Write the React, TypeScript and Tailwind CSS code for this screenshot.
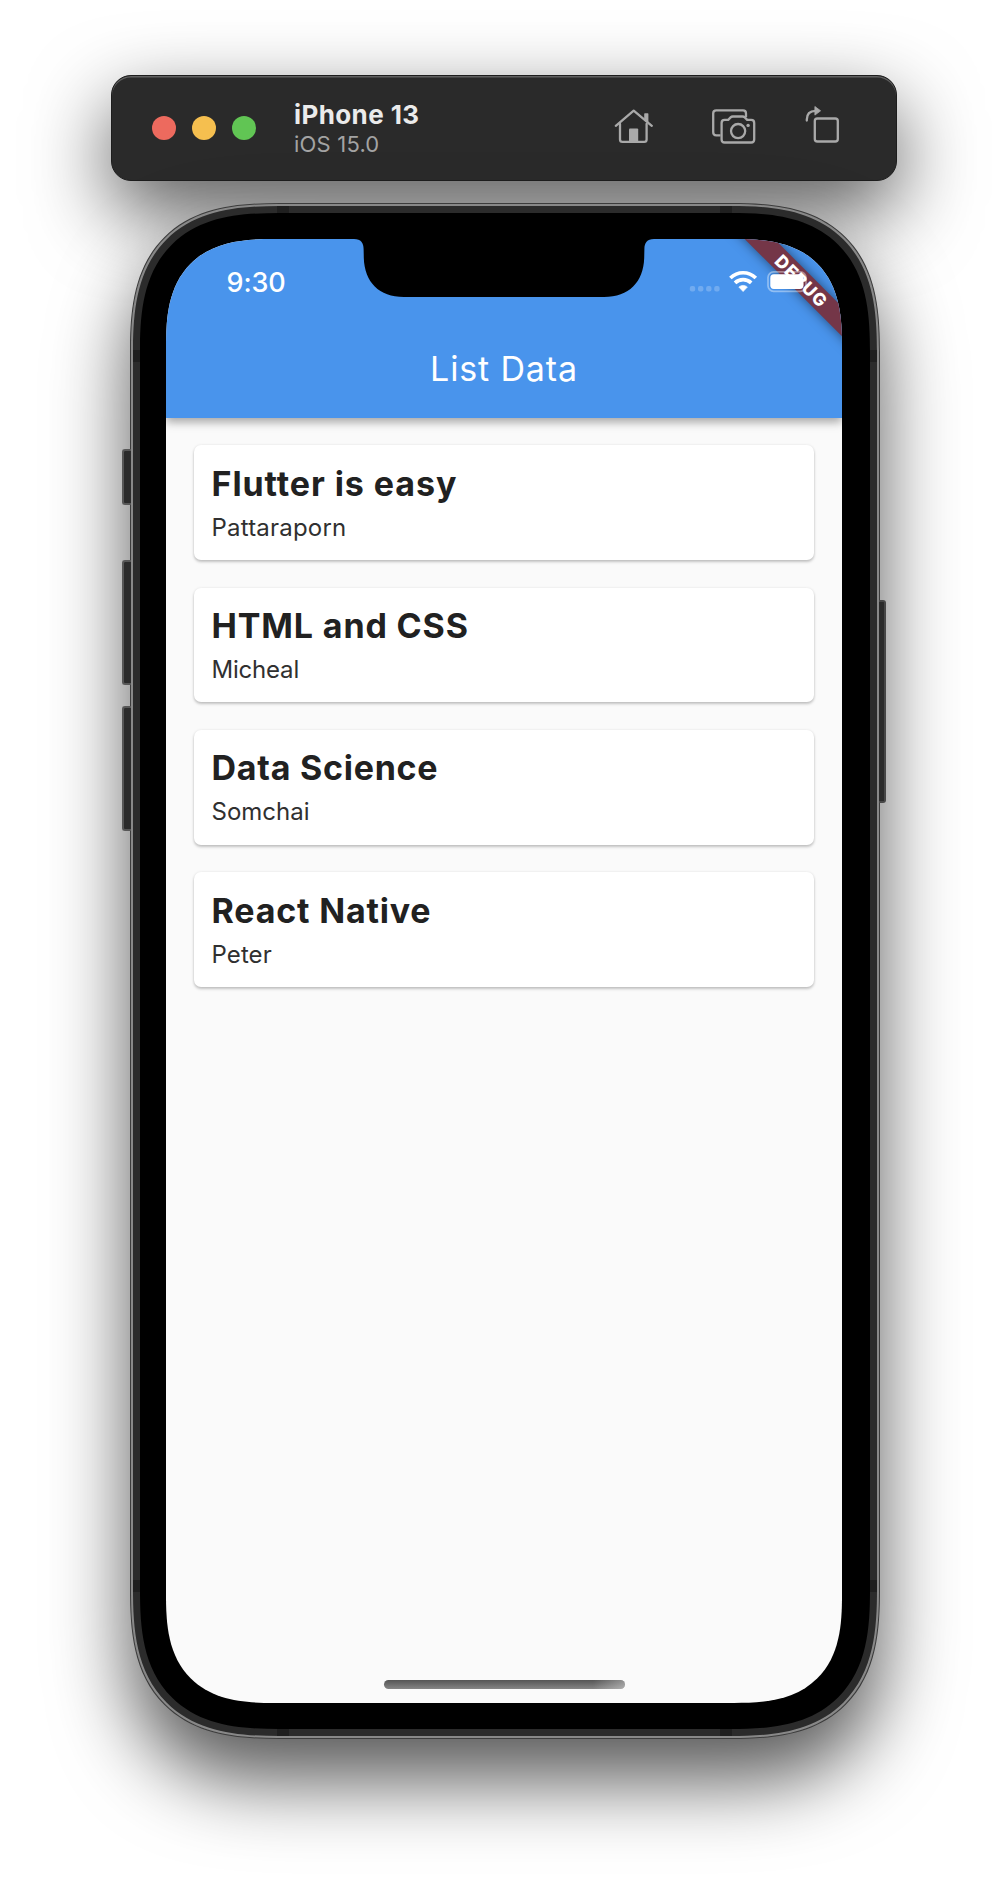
import React from "react";

const courses = [
  { title: "Flutter is easy", author: "Pattaraporn", titleSpacing: "tracking-[0.92px]", authorSpacing: "tracking-[0.2px]" },
  { title: "HTML and CSS", author: "Micheal", titleSpacing: "tracking-[0.85px]", authorSpacing: "tracking-[-0.2px]" },
  { title: "Data Science", author: "Somchai", titleSpacing: "tracking-[0.75px]", authorSpacing: "tracking-[0px]" },
  { title: "React Native", author: "Peter", titleSpacing: "tracking-[0.82px]", authorSpacing: "tracking-[0.1px]" },
];

function HomeIcon() {
  return (
    <svg width="42" height="40" viewBox="0 0 42 40" fill="none" stroke="#a9a9a9" strokeWidth="2.3" strokeLinecap="round" strokeLinejoin="round">
      <path d="M2.8 19.8 L20.7 4.6 L38.8 19.8" />
      <path d="M7 18 V33.4 Q7 35.8 9.4 35.8 H31.2 Q33.6 35.8 33.6 33.4 V18" />
      <path d="M31.2 8 Q31.2 7.3 31.9 7.3 H34.7 Q35.4 7.3 35.4 8 V17.4 L31.2 14.2 Z" fill="#a9a9a9" stroke="none" />
      <path d="M16 23.5 Q16 22.5 17 22.5 H24.2 Q25.2 22.5 25.2 23.5 V36.5 H16 Z" fill="#a9a9a9" stroke="none" />
    </svg>
  );
}

function CameraIcon() {
  return (
    <svg width="46" height="38" viewBox="0 0 46 38" fill="none" stroke="#a9a9a9" strokeWidth="2.3" strokeLinejoin="round">
      <path d="M10.5 27.3 H6.2 Q3.2 27.3 3.2 24.3 V5.4 Q3.2 2.4 6.2 2.4 H33 Q36 2.4 36 5.4 V9" />
      <path d="M14.6 11.9 H18.2 L20.6 9.4 Q21.5 8.5 22.8 8.5 H32.6 Q33.9 8.5 34.8 9.4 L37.2 11.9 H41.2 Q44.2 11.9 44.2 14.9 V31.5 Q44.2 34.5 41.2 34.5 H14.6 Q11.6 34.5 11.6 31.5 V14.9 Q11.6 11.9 14.6 11.9 Z" />
      <circle cx="28.1" cy="23.1" r="7.1" />
      <circle cx="38.1" cy="17.4" r="1.7" fill="#a9a9a9" stroke="none" />
    </svg>
  );
}

function RotateIcon() {
  return (
    <svg width="36" height="40" viewBox="0 0 36 40" fill="none" stroke="#a9a9a9" strokeWidth="2.3">
      <path d="M2.8 16.6 V15.5 Q2.8 7 11.5 6.8" strokeLinecap="round" />
      <path d="M10.9 2.5 L16.6 6.8 L10.9 11.1 Z" fill="#a9a9a9" strokeWidth="0.8" strokeLinejoin="round" />
      <rect x="10.8" y="14.5" width="23" height="23" rx="2.6" />
    </svg>
  );
}

function Toolbar() {
  return (
    <header className="relative ml-[111px] flex h-[106px] w-[786px] items-center rounded-[20px] border border-[#1d1d1d] bg-[#2a2a2a] pl-[40px] shadow-[inset_0_1.5px_0_#606060,0_30px_80px_rgba(0,0,0,0.65)]">
      <div className="flex gap-4">
        <span className="size-6 rounded-full bg-[#ed6a5e]" />
        <span className="size-6 rounded-full bg-[#f5bf4f]" />
        <span className="size-6 rounded-full bg-[#61c554]" />
      </div>
      <div className="ml-[38px] w-[318.5px] pt-[2px]">
        <div className="text-[26px] leading-[30px] font-bold tracking-[0.4px] text-[#ebebeb]">iPhone 13</div>
        <div className="text-[22px] leading-[28px] tracking-[0.2px] text-[#a3a3a3]">iOS 15.0</div>
      </div>
      <div className="flex items-start pb-[5px]">
        <HomeIcon />
        <div className="ml-[55px] pt-[2px]"><CameraIcon /></div>
        <div className="-mt-[2px] ml-[48.5px]"><RotateIcon /></div>
      </div>
    </header>
  );
}

function StatusIcons() {
  return (
    <svg className="absolute top-[28px] left-[520px] z-20" width="130" height="30" viewBox="0 0 130 30" fill="none">
      <g fill="#ffffff" fillOpacity="0.22">
        <rect x="3.8" y="19" width="5.4" height="5.6" rx="2" />
        <rect x="12" y="19" width="5.4" height="5.6" rx="2" />
        <rect x="20.1" y="19" width="5.4" height="5.6" rx="2" />
        <rect x="28.2" y="19" width="5.4" height="5.6" rx="2" />
      </g>
      <g stroke="#ffffff" strokeWidth="3.7">
        <path d="M44.4 11 C51.6 4 62.6 4 69.8 11" />
        <path d="M49 15.9 C53.6 11.6 60.6 11.6 65.2 15.9" />
      </g>
      <path d="M52.8 20 C55.3 17.9 59 17.9 61.4 20 L57.1 24.6 Z" fill="#ffffff" stroke="#ffffff" strokeWidth="0.6" strokeLinejoin="round" />
      <rect x="82" y="4.9" width="38" height="19.4" rx="5.6" stroke="#ffffff" strokeOpacity="0.4" strokeWidth="1.7" />
      <rect x="84.3" y="7.3" width="33.2" height="14.6" rx="3.6" fill="#ffffff" />
    </svg>
  );
}

function Notch() {
  return (
    <svg className="absolute top-[-1px] left-[184px] z-20" width="308" height="60" viewBox="0 0 308 60">
      <path d="M0 0 V1 H4 C11 1 13.6 5 13.6 11 L13.8 20 C14.6 44 29 59 54 59 H254 C279 59 293.4 44 294.2 20 L294.4 11 C294.4 5 297 1 304 1 H308 V0 Z" fill="#000000" />
    </svg>
  );
}

function AppBar() {
  return (
    <div className="relative z-10 flex h-[179px] flex-col bg-[#4994ec] text-white shadow-[0_4px_9px_rgba(0,0,0,0.35)]">
      <div className="h-[82px] pt-[27px] pl-[60.5px] text-[27px] leading-[34px] font-medium tracking-[-0.1px]">9:30</div>
      <div className="flex h-[95px] items-center justify-center text-[34px] font-normal tracking-[0.85px]">List Data</div>
    </div>
  );
}

function DebugRibbon() {
  return (
    <div className="absolute top-[31.3px] left-[544.7px] z-10 flex h-[21px] w-[180px] rotate-45 items-center justify-center bg-[#743648] pl-[1.5px] text-[17.5px] leading-none font-extrabold tracking-[1.1px] text-white shadow-[0_0_12px_rgba(0,0,0,0.5)]">
      DEBUG
    </div>
  );
}

function Phone() {
  return (
    <main className="relative mt-[22px] ml-[130px] h-[1536px] w-[750px]">
      <div className="relative size-full rounded-[112px] border border-[#3c3c3c] bg-[#888888] p-[2px] shadow-[0_42px_78px_rgba(0,0,0,0.65)] supports-[corner-shape:round]:rounded-[150px] supports-[corner-shape:round]:[corner-shape:superellipse(1.42)]">
        <i className="absolute top-[245px] left-[-9px] h-[56px] w-[9px] rounded-l-[3px] border-2 border-r-0 border-[#575757] bg-[#2b2b2b]" />
        <i className="absolute top-[356px] left-[-9px] h-[125px] w-[9px] rounded-l-[3px] border-2 border-r-0 border-[#575757] bg-[#2b2b2b]" />
        <i className="absolute top-[502px] left-[-9px] h-[125px] w-[9px] rounded-l-[3px] border-2 border-r-0 border-[#575757] bg-[#2b2b2b]" />
        <i className="absolute top-[396px] right-[-7px] h-[203px] w-[7px] rounded-r-[3px] border-2 border-l-0 border-[#474747] bg-[#2b2b2b]" />
        <div className="relative size-full overflow-hidden rounded-[109px] bg-[#2b2b2b] p-[7px] supports-[corner-shape:round]:rounded-[147px] supports-[corner-shape:round]:[corner-shape:superellipse(1.42)]">
          <i className="absolute top-0 left-[144px] h-full w-3 bg-[#1f1f1f]" />
          <i className="absolute top-0 right-[145px] h-full w-3 bg-[#1f1f1f]" />
          <i className="absolute top-[144px] left-0 h-3 w-full bg-[#1f1f1f]" />
          <i className="absolute bottom-[144px] left-0 h-3 w-full bg-[#1f1f1f]" />
          <div className="relative size-full rounded-[102px] bg-black pt-[26px] pl-[26px] supports-[corner-shape:round]:rounded-[139px] supports-[corner-shape:round]:[corner-shape:superellipse(1.42)]">
            <div className="relative flex h-[1464px] w-[676px] flex-col overflow-hidden rounded-[80px] bg-[#fafafa] supports-[corner-shape:round]:rounded-[108px] supports-[corner-shape:round]:[corner-shape:superellipse(1.42)]">
              <AppBar />
              <ul className="flex flex-col gap-[27.7px] px-7 pt-[27.4px]">
                {courses.map((course) => (
                  <li key={course.title} className="h-[114.6px] rounded-[7px] bg-white pt-[17.3px] pl-[17.5px] shadow-[0_2px_3px_rgba(0,0,0,0.22),0_0_3px_rgba(0,0,0,0.08)]">
                    <div className={`text-[34px] leading-[42px] font-bold text-[#212121] ${course.titleSpacing}`}>{course.title}</div>
                    <div className={`mt-[8px] text-[24px] leading-[30px] text-[#303030] ${course.authorSpacing}`}>{course.author}</div>
                  </li>
                ))}
              </ul>
              <div className="mx-auto mt-auto mb-[14px] h-[9px] w-[241px] overflow-hidden rounded-full bg-linear-to-b from-[#555555] to-[#858585]">
                <div className="ml-auto h-full w-8 bg-linear-to-r from-white/0 to-white/35" />
              </div>
              <DebugRibbon />
              <Notch />
              <StatusIcons />
            </div>
          </div>
        </div>
      </div>
    </main>
  );
}

export default function App() {
  return (
    <div className="h-[1890px] w-[1008px] overflow-hidden bg-white pt-[75px] font-['Inter',sans-serif]">
      <Toolbar />
      <Phone />
    </div>
  );
}
